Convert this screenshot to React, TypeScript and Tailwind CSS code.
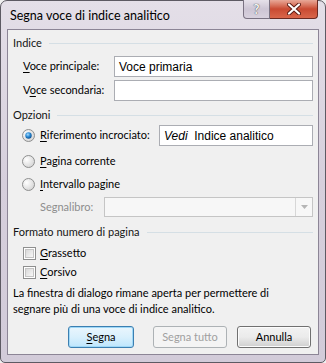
import type { ReactNode } from "react";

const ui = { fontFamily: "Lato, 'Liberation Sans', sans-serif" };
const field = { fontFamily: "'Liberation Sans', Arial, sans-serif" };

function Header({ children, className }: { children: ReactNode; className: string }) {
  return (
    <div className={`flex items-center h-[14px] ${className}`}>
      <span className="pr-[7px] text-[#151515] whitespace-nowrap">{children}</span>
      <div className="flex-1 h-px bg-[#d5dfe5]" />
    </div>
  );
}

function Radio({ checked }: { checked?: boolean }) {
  return (
    <svg width="13" height="13" viewBox="0 0 13 13" className="shrink-0">
      <defs>
        <radialGradient id={checked ? "rgOn" : "rgOff"} cx="0.35" cy="0.35" r="0.8">
          <stop offset="0" stopColor="#ffffff" />
          <stop offset="1" stopColor="#cfcfcf" />
        </radialGradient>
        <radialGradient id="dot" cx="0.4" cy="0.35" r="0.7">
          <stop offset="0" stopColor="#a8dcff" />
          <stop offset="0.5" stopColor="#2a8ad4" />
          <stop offset="1" stopColor="#0b4b8a" />
        </radialGradient>
      </defs>
      <circle cx="6.5" cy="6.5" r="6" fill={`url(#${checked ? "rgOn" : "rgOff"})`} stroke="#8e8f8f" />
      {checked && <circle cx="6.5" cy="6.5" r="3.2" fill="url(#dot)" />}
    </svg>
  );
}

function Check() {
  return (
    <div className="w-[13px] h-[13px] shrink-0 border border-[#8e8f8f] bg-white p-px">
      <div className="w-full h-full border border-[#c4c4c4] bg-gradient-to-br from-[#d9d9d9] to-[#f7f7f7]" />
    </div>
  );
}

function U({ children }: { children: ReactNode }) {
  return <span className="underline underline-offset-2">{children}</span>;
}

export default function App() {
  return (
    <div className="w-[326px] h-[363px] bg-[#f0f0f0]" style={ui}>
      <div className="w-[326px] h-[363px] rounded-t-[7px] rounded-b-[5px] border border-[#5d5a63] bg-gradient-to-b from-[#e4dfe8] via-[#d6cfdc] to-[#d2cbd9] flex flex-col text-[11px] text-black">
        <div className="h-[28px] flex items-start pl-[9px] pr-[7px]">
          <div className="flex-1 pt-[6px] text-[12.5px] text-black">Segna voce di indice analitico</div>
          <div className="flex h-[19px] -mt-px">
            <div className="w-[27px] h-full rounded-bl-[4px] border border-[#7a7282] border-t-0 bg-gradient-to-b from-[#e6e1ea] via-[#cdc5d4] to-[#d8d1de] flex items-center justify-center">
              <span className="text-[13px] font-bold text-[#f4f4f4] leading-none" style={{ textShadow: "0 0 1px #555, 0 0 1px #555" }}>?</span>
            </div>
            <div className="w-[48px] h-full rounded-br-[4px] border border-[#6b2a22] border-t-0 border-l-0 bg-gradient-to-b from-[#e8a898] via-[#c94a32] to-[#d9664b] flex items-center justify-center">
              <svg width="14" height="12" viewBox="0 0 14 12">
                <path d="M2 1.5 L12 10.5 M12 1.5 L2 10.5" stroke="#5a1a12" strokeWidth="4" strokeLinecap="round" />
                <path d="M2 1.5 L12 10.5 M12 1.5 L2 10.5" stroke="#ffffff" strokeWidth="2.2" strokeLinecap="round" />
              </svg>
            </div>
          </div>
        </div>

        <div className="mx-[6px] h-[326px] border border-[#8c8596] bg-[#f0f0f0] px-[5px] flex flex-col">
          <Header className="mt-[6px]">Indice</Header>

          <div className="flex items-center h-[21px] mt-[6px] pl-[10px]">
            <span className="w-[91px] whitespace-nowrap"><U>V</U>oce principale:</span>
            <div className="flex-1 h-[21px] border border-[#abadb3] bg-white flex items-center px-[4px] text-[12px]" style={field}>Voce primaria</div>
          </div>
          <div className="flex items-center h-[21px] mt-[3px] pl-[10px]">
            <span className="w-[91px] whitespace-nowrap">V<U>o</U>ce secondaria:</span>
            <div className="flex-1 h-[21px] border border-[#abadb3] bg-white" />
          </div>

          <Header className="mt-[7px]">Opzioni</Header>

          <div className="flex items-center h-[21px] mt-[3px] pl-[9px]">
            <Radio checked />
            <span className="ml-[5px] w-[119px] whitespace-nowrap"><U>R</U>iferimento incrociato:</span>
            <div className="flex-1 h-[21px] border border-[#abadb3] bg-white flex items-center px-[4px] text-[12px]" style={field}>
              <i>Vedi</i>&nbsp; Indice analitico
            </div>
          </div>
          <div className="flex items-center h-[16px] mt-[7px] pl-[9px]">
            <Radio />
            <span className="ml-[5px]"><U>P</U>agina corrente</span>
          </div>
          <div className="flex items-center h-[16px] mt-[7px] pl-[9px]">
            <Radio />
            <span className="ml-[5px]"><U>I</U>ntervallo pagine</span>
          </div>
          <div className="flex items-center h-[20px] mt-[5px] pl-[27px]">
            <span className="w-[64px] text-[#8d8d8d] whitespace-nowrap">Segnalibro:</span>
            <div className="flex-1 h-[20px] border border-[#c5c5c5] bg-[#f7f7f7] flex justify-end">
              <div className="w-[17px] h-full border-l border-[#d7d7d7] flex items-center justify-center">
                <svg width="7" height="4" viewBox="0 0 7 4"><path d="M0 0 H7 L3.5 4 Z" fill="#b5b5b5" /></svg>
              </div>
            </div>
          </div>

          <Header className="mt-[8px]">Formato numero di pagina</Header>

          <div className="flex items-center h-[16px] mt-[6px] pl-[10px]">
            <Check />
            <span className="ml-[4px]"><U>G</U>rassetto</span>
          </div>
          <div className="flex items-center h-[16px] mt-[3px] pl-[10px]">
            <Check />
            <span className="ml-[4px]"><U>C</U>orsivo</span>
          </div>

          <p className="mt-[5px] leading-[16px] pr-[40px]">
            La finestra di dialogo rimane aperta per permettere di segnare più di una voce di indice analitico.
          </p>

          <div className="flex mt-[9px] h-[22px] justify-end pr-[2px]">
            <button className="w-[66px] h-full rounded-[3px] border border-[#3c7fb1] bg-gradient-to-b from-[#eaf6fd] via-[#d9f0fc] to-[#bee6fd] shadow-[inset_0_0_0_1px_#9fd8f7]">
              <U>S</U>egna
            </button>
            <button className="w-[74px] h-full ml-[19px] rounded-[3px] border border-[#adb2b5] bg-[#f4f4f4] text-[#a0a0a0]">
              Segna tutto
            </button>
            <button className="w-[74px] h-full ml-[10px] rounded-[3px] border border-[#707070] bg-gradient-to-b from-[#f2f2f2] via-[#ebebeb] to-[#cfcfcf] shadow-[inset_0_0_0_1px_#fcfcfc]">
              Annulla
            </button>
          </div>
        </div>
      </div>
    </div>
  );
}
